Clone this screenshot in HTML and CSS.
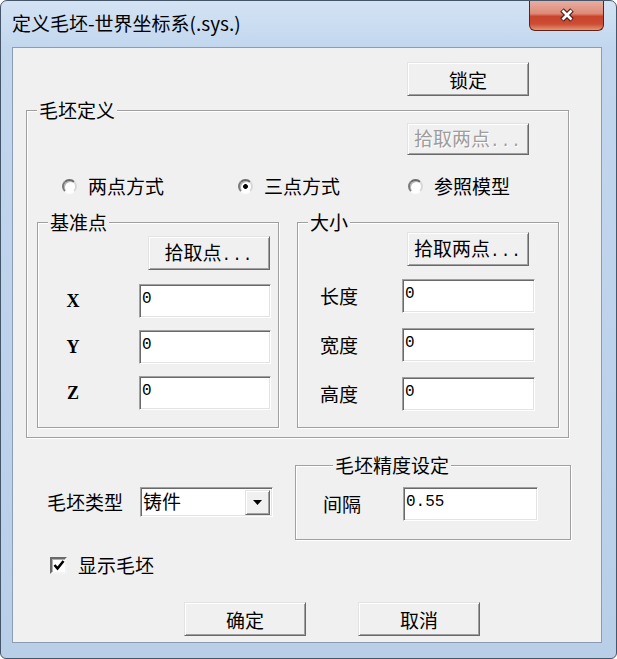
FILE: index.html
```html
<!DOCTYPE html>
<html lang="zh-CN">
<head>
    <meta charset="UTF-8">
    <title>定义毛坯-世界坐标系(.sys.)</title>
    <link rel="stylesheet" href="styles.css">
</head>
<body>
    <div class="window">
        <div class="titlebar">
            <span class="title">定义毛坯-世界坐标系(.sys.)</span>
            <button class="close-btn">
                <svg width="20" height="16" viewBox="0 0 20 16">
                    <path d="M5 3 L15 13 M15 3 L5 13" stroke="#4a1d16" stroke-width="5" fill="none"/>
                    <path d="M5.5 3.5 L14.5 12.5 M14.5 3.5 L5.5 12.5" stroke="#fff" stroke-width="2.6" fill="none"/>
                </svg>
            </button>
        </div>

        <div class="client">
            <div class="top-row">
                <button class="btn">锁定</button>
            </div>

            <fieldset class="group group-main">
                <legend>毛坯定义</legend>
                <div class="pick-row pick-main">
                    <button class="btn btn-off" disabled>拾取两点<span class="dots">...</span></button>
                </div>

                <div class="radio-row">
                    <label class="radio"><span class="radio-mark"></span>两点方式</label>
                    <label class="radio"><span class="radio-mark checked"></span>三点方式</label>
                    <label class="radio"><span class="radio-mark"></span>参照模型</label>
                </div>

                <div class="sub-row">
                    <fieldset class="group group-base">
                        <legend>基准点</legend>
                        <div class="pick-row pick-base">
                            <button class="btn">拾取点<span class="dots">...</span></button>
                        </div>
                        <div class="fields fields-xyz">
                            <span class="axis">X</span><input class="edit" value="0">
                            <span class="axis">Y</span><input class="edit" value="0">
                            <span class="axis">Z</span><input class="edit" value="0">
                        </div>
                    </fieldset>

                    <fieldset class="group group-size">
                        <legend>大小</legend>
                        <div class="pick-row pick-size">
                            <button class="btn">拾取两点<span class="dots">...</span></button>
                        </div>
                        <div class="fields fields-size">
                            <span class="lbl">长度</span><input class="edit" value="0">
                            <span class="lbl">宽度</span><input class="edit" value="0">
                            <span class="lbl">高度</span><input class="edit" value="0">
                        </div>
                    </fieldset>
                </div>
            </fieldset>

            <div class="bottom">
                <div class="bottom-left">
                    <div class="combo-row">
                        <span class="lbl">毛坯类型</span>
                        <div class="combo">
                            <span class="combo-text">铸件</span>
                            <span class="combo-arrow">
                                <svg width="9" height="5" viewBox="0 0 9 5"><polygon points="0,0 9,0 4.5,5" fill="#000"/></svg>
                            </span>
                        </div>
                    </div>
                    <label class="check-row">
                        <span class="check-box">
                            <svg width="12" height="12" viewBox="0 0 12 12">
                                <polyline points="1.5,6 4.5,9.5 10.5,2" fill="none" stroke="#000" stroke-width="2.6"/>
                            </svg>
                        </span>
                        显示毛坯
                    </label>
                </div>

                <fieldset class="group group-precision">
                    <legend>毛坯精度设定</legend>
                    <div class="precision-row">
                        <span class="lbl">间隔</span>
                        <input class="edit edit-precision" value="0.55">
                    </div>
                </fieldset>
            </div>

            <div class="actions">
                <button class="btn">确定</button>
                <button class="btn">取消</button>
            </div>
        </div>
    </div>
</body>
</html>
```

FILE: styles.css
```css
body {
    margin: 0;
    font-family: "Noto Sans CJK SC", sans-serif;
    font-size: 19px;
    color: #000;
}
.window {
    width: 617px;
    height: 659px;
    box-sizing: border-box;
    border: 1px solid #46566a;
    border-radius: 7px 7px 6px 6px;
    padding: 0 14px 15px 11px;
    background: linear-gradient(180deg, #d4e3f4 0, #c2d7ee 46px, #b9cfe8 100%);
    display: flex;
    flex-direction: column;
    overflow: hidden;
}
.titlebar {
    height: 46px;
    flex: none;
    display: flex;
    justify-content: space-between;
    align-items: flex-start;
    margin-right: -2px;
}
.title {
    margin-top: 12px;
    line-height: 20px;
    font-size: 19px;
}
.close-btn {
    width: 75px;
    height: 31px;
    margin-top: -1px;
    padding: 0;
    border: 1px solid #5b231b;
    border-top: 0;
    border-radius: 0 0 6px 6px;
    background: linear-gradient(180deg, #eab0a3 0, #dd8a78 45%, #c8442c 55%, #cd4c33 80%, #e29475 100%);
    display: flex;
    align-items: center;
    justify-content: center;
}
.client {
    flex: 1;
    box-sizing: border-box;
    border: 1px solid #8c9db3;
    background: #f0f0f0;
}
.top-row {
    display: flex;
    justify-content: flex-end;
    padding: 14px 72px 0 0;
}
.btn {
    width: 122px;
    height: 34px;
    box-sizing: border-box;
    padding: 0;
    font-family: "Noto Sans CJK SC", sans-serif;
    font-size: 19px;
    line-height: 1;
    color: #000;
    background: #f0f0f0;
    border: 1px solid;
    border-color: #e3e3e3 #696969 #696969 #e3e3e3;
    box-shadow: inset 1px 1px #fff, inset -1px -1px #a0a0a0;
}
.btn-off {
    height: 32px;
    color: #9d9d9d;
    text-shadow: 1px 1px #fff;
}
.dots {
    font-family: "Liberation Mono", monospace;
    font-size: 16px;
    letter-spacing: 1px;
}
.group {
    margin: 0;
    padding: 0;
    min-width: 0;
    box-sizing: border-box;
    border: 1px solid #a0a0a0;
    box-shadow: 1px 1px #fff, inset 1px 1px #fff;
}
.group legend {
    margin-left: 10px;
    padding: 0 2px;
    line-height: 20px;
    font-size: 19px;
    background: #f0f0f0;
}
.group-main {
    margin: 4px 32px 0 13px;
    padding: 0 0 9px;
}
.pick-row {
    display: flex;
    justify-content: flex-end;
}
.pick-main {
    padding: 3px 39px 0 0;
}
.radio-row {
    display: grid;
    grid-template-columns: 176px 170px auto;
    margin-top: 21px;
    padding-left: 35px;
    line-height: 20px;
}
.radio {
    display: flex;
    align-items: center;
    gap: 11px;
}
.radio-mark {
    flex: none;
    width: 15px;
    height: 15px;
    box-sizing: border-box;
    border-radius: 50%;
    border: 2px solid;
    border-color: #6a6a6a #d8d8d8 #fdfdfd #7a7a7a;
    box-shadow: inset 1px 1px #b4b4b4;
    background: #fff;
}
.radio-mark.checked {
    background: radial-gradient(circle, #000 0, #000 2px, #fff 2.8px);
}
.sub-row {
    display: flex;
    gap: 18px;
    margin-top: 16px;
    padding: 0 9px 0 10px;
}
.group-base {
    width: 242px;
    padding: 0 0 17px;
}
.group-size {
    width: 262px;
    padding: 0 0 16px;
}
.pick-base {
    padding: 4px 8px 0 0;
}
.pick-size {
    padding: 0 29px 0 0;
}
.fields {
    display: grid;
    align-items: center;
    line-height: 20px;
}
.fields-xyz {
    grid-template-columns: 70px 132px;
    column-gap: 31px;
    row-gap: 12px;
    margin-top: 14px;
}
.fields-size {
    grid-template-columns: 38px 133px;
    column-gap: 44px;
    row-gap: 15px;
    margin-top: 13px;
    padding-left: 22px;
}
.axis {
    text-align: center;
    font-family: "Liberation Serif", serif;
    font-weight: bold;
    font-size: 18px;
}
.lbl {
    line-height: 20px;
    white-space: nowrap;
}
.edit {
    box-sizing: border-box;
    width: 100%;
    height: 34px;
    margin: 0;
    padding: 0 0 5px 2px;
    font-family: "Liberation Mono", monospace;
    font-size: 16px;
    color: #000;
    background: #fff;
    border: 1px solid;
    border-color: #a0a0a0 #fff #fff #a0a0a0;
    box-shadow: inset 1px 1px #696969, inset -1px -1px #e3e3e3;
    outline: none;
}
.bottom {
    display: flex;
    margin-top: 17px;
}
.bottom-left {
    width: 282px;
    box-sizing: border-box;
    padding-left: 34px;
}
.combo-row {
    display: flex;
    align-items: center;
    gap: 17px;
    margin-top: 32px;
}
.combo {
    width: 133px;
    height: 30px;
    box-sizing: border-box;
    background: #fff;
    border: 1px solid;
    border-color: #a0a0a0 #fff #fff #a0a0a0;
    box-shadow: inset 1px 1px #696969, inset -1px -1px #e3e3e3;
    display: flex;
    align-items: center;
    justify-content: space-between;
    padding: 0 2px 0 2px;
}
.combo-text {
    line-height: 20px;
    margin-top: -3px;
}
.combo-arrow {
    width: 25px;
    height: 25px;
    box-sizing: border-box;
    background: #f0f0f0;
    border: 1px solid;
    border-color: #e3e3e3 #696969 #696969 #e3e3e3;
    box-shadow: inset 1px 1px #fff, inset -1px -1px #a0a0a0;
    display: flex;
    align-items: center;
    justify-content: center;
}
.check-row {
    display: flex;
    align-items: center;
    gap: 11px;
    margin: 38px 0 0 3px;
    line-height: 20px;
}
.check-box {
    flex: none;
    width: 17px;
    height: 17px;
    box-sizing: border-box;
    border: 2px solid;
    border-color: #6a6a6a #f4f4f4 #f4f4f4 #6a6a6a;
    box-shadow: inset 1px 1px #b0b0b0;
    background: #fff;
    display: flex;
    align-items: center;
    justify-content: center;
}
.group-precision {
    width: 276px;
    align-self: flex-start;
    padding: 12px 0 18px 27px;
}
.precision-row {
    display: flex;
    align-items: center;
    gap: 42px;
}
.edit-precision {
    width: 135px;
}
.actions {
    display: flex;
    gap: 52px;
    padding-left: 171px;
    margin-top: 27px;
}
```
